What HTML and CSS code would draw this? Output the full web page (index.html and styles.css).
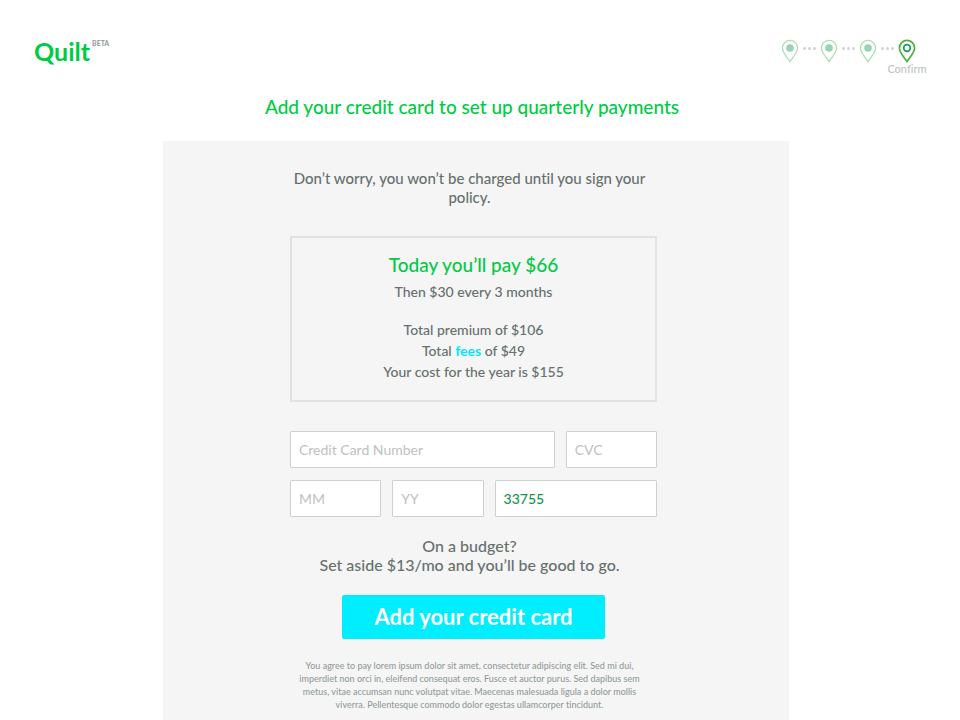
FILE: index.html
```html
<!DOCTYPE html>
<html lang="en">
<head>
<meta charset="utf-8">
<meta name="viewport" content="width=device-width, initial-scale=1">
<title>Quilt – Confirm</title>
<link rel="stylesheet" href="styles.css">
</head>
<body>
<svg class="defs" aria-hidden="true">
  <symbol id="pin" viewBox="0 0 18 24">
    <path d="M9 22.600C6 18 1.400 13.600 1.400 9a7.600 7.600 0 0 1 15.200 0C16.600 13.600 12 18 9 22.600Z" fill="none" stroke="currentColor"/>
  </symbol>
</svg>
<header class="header">
  <a class="logo" href="#">Quilt<sup class="beta">BETA</sup></a>
  <ol class="steps">
    <li class="step"><svg class="pin" viewBox="0 0 18 24"><use href="#pin"/><circle class="dot" cx="9" cy="9" r="3.800"/></svg></li>
    <li class="step"><svg class="pin" viewBox="0 0 18 24"><use href="#pin"/><circle class="dot" cx="9" cy="9" r="3.800"/></svg></li>
    <li class="step"><svg class="pin" viewBox="0 0 18 24"><use href="#pin"/><circle class="dot" cx="9" cy="9" r="3.800"/></svg></li>
    <li class="step current" aria-current="step"><svg class="pin" viewBox="0 0 18 24"><use href="#pin"/><circle class="ring" cx="9" cy="9" r="3.300"/></svg><span class="step-name">Confirm</span></li>
  </ol>
</header>
<main class="main">
  <h1 class="title">Add your credit card to set up quarterly payments</h1>
  <section class="panel">
    <form class="form">
      <p class="note">Don’t worry, you won’t be charged until you sign your policy.</p>
      <div class="summary">
        <h2 class="today">Today you’ll pay $66</h2>
        <p class="then">Then $30 every 3 months</p>
        <p class="line">Total premium of $106</p>
        <p class="line">Total <a class="fees" href="#">fees</a> of $49</p>
        <p class="line">Your cost for the year is $155</p>
      </div>
      <div class="fields">
        <input class="field number" type="text" placeholder="Credit Card Number" aria-label="Credit Card Number">
        <input class="field" type="text" placeholder="CVC" aria-label="CVC">
        <input class="field" type="text" placeholder="MM" aria-label="Expiry month">
        <input class="field" type="text" placeholder="YY" aria-label="Expiry year">
        <input class="field zip" type="text" value="33755" aria-label="Zip code">
      </div>
      <p class="note budget">On a budget?<br>Set aside $13/mo and you’ll be good to go.</p>
      <button class="submit" type="button">Add your credit card</button>
      <p class="legal">You agree to pay lorem ipsum dolor sit amet, consectetur adipiscing elit. Sed mi dui, imperdiet non orci in, eleifend consequat eros. Fusce et auctor purus. Sed dapibus sem metus, vitae accumsan nunc volutpat vitae. Maecenas malesuada ligula a dolor mollis viverra. Pellentesque commodo dolor egestas ullamcorper tincidunt.</p>
    </form>
  </section>
</main>
</body>
</html>
```

FILE: styles.css
```css
* {
  box-sizing: border-box;
}

body {
  display: flex;
  flex-direction: column;
  min-height: 100vh;
  margin: 0;
  background: #fff;
  color: #66706e;
  font-family: Lato, sans-serif;
  font-weight: 500;
  font-variant-ligatures: none;
}

h1,
h2,
p,
ol {
  margin: 0;
  padding: 0;
  font-weight: 500;
}

.defs {
  position: absolute;
  width: 0;
  height: 0;
}

.header {
  display: flex;
  justify-content: space-between;
  padding: 39px 44px 0 34px;
}

.logo {
  display: flex;
  color: #00cb45;
  font-size: 25px;
  font-weight: 700;
  line-height: 24px;
  text-decoration: none;
}

.beta {
  padding-left: 2px;
  color: #8f9896;
  font-size: 7px;
  font-weight: 700;
  line-height: 8px;
}

.steps {
  display: flex;
  list-style: none;
}

.step {
  position: relative;
  display: flex;
  color: #b0deb0;
}

.step:not(:last-child)::after {
  content: "";
  width: 15px;
  height: 3px;
  margin: 8px 3px 0;
  background: radial-gradient(circle, #d3d6d9 1px, transparent 2px) 0 0 / 5px 3px;
}

.pin {
  width: 18px;
  height: 24px;
  stroke-width: 1.300;
}

.dot {
  fill: #97d4b5;
}

.current {
  color: #4cb03c;
}

.current .pin {
  stroke-width: 1.700;
}

.ring {
  fill: none;
  stroke: #16a05a;
}

.step-name {
  position: absolute;
  top: 23px;
  left: 50%;
  color: #bfc3c3;
  font-size: 11px;
  font-weight: 500;
  line-height: 14px;
  transform: translateX(-50%);
}

.main {
  display: flex;
  flex: 1;
  flex-direction: column;
  width: 100%;
  max-width: 634px;
  margin: 0 auto;
  padding: 34px 8px 0 0;
}

.title {
  padding-right: 8px;
  color: #00cb45;
  font-size: 19px;
  line-height: 20px;
  text-align: center;
}

.panel {
  flex: 1;
  margin-top: 24px;
  padding: 28px 5px 8px 0;
  border-radius: 3px 3px 0 0;
  background: #f5f5f5;
}

.form {
  display: flex;
  flex-direction: column;
  max-width: 367px;
  margin: 0 auto;
  text-align: center;
}

.note {
  padding-right: 8px;
  font-size: 15px;
  line-height: 19px;
}

.summary {
  margin-top: 29px;
  padding: 15px 0 18px;
  border: 2px solid #e1e3e3;
}

.today {
  color: #00cb45;
  font-size: 19px;
  line-height: 24px;
}

.then {
  margin: 4px 0 17px;
  font-size: 14px;
  line-height: 21px;
}

.line {
  font-size: 14px;
  line-height: 21px;
}

.fees {
  color: #00e9fb;
  font-weight: 700;
  text-decoration: none;
}

.fields {
  display: grid;
  grid-template-columns: 91fr 91fr 60fr 91fr;
  gap: 12px 11px;
  margin-top: 29px;
}

.field {
  width: 100%;
  min-width: 0;
  height: 37px;
  padding: 0 8px;
  border: 1px solid #ccd2d1;
  border-radius: 1px;
  background: #fff;
  color: #129750;
  font: 500 14px Lato, sans-serif;
}

.field::placeholder {
  color: #bdc2c1;
  font-weight: 400;
}

.number {
  grid-column: span 3;
}

.zip {
  grid-column: span 2;
}

.budget {
  margin-top: 19px;
  font-size: 16px;
}

.submit {
  align-self: center;
  margin-top: 21px;
  padding: 0 32px;
  border: 0;
  border-radius: 2px;
  background: #00eeff;
  color: #fff;
  font: 700 22px/44px Lato, sans-serif;
}

.legal {
  margin-top: 20px;
  padding: 0 8px 0 0;
  color: #929b99;
  font-size: 9px;
  line-height: 13px;
}
```
